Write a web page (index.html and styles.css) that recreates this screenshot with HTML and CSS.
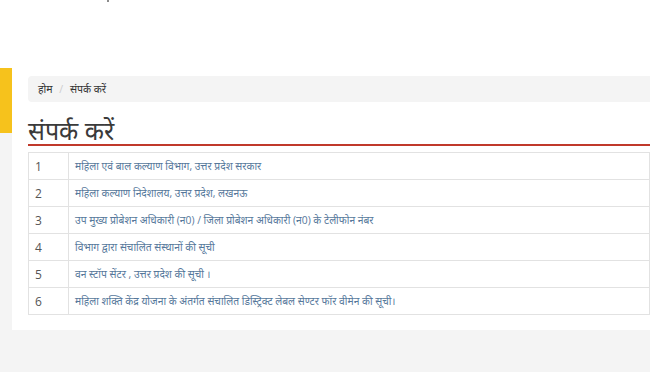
FILE: index.html
```html
<!DOCTYPE html>
<html lang="hi">
<head>
    <meta charset="UTF-8">
    <meta name="viewport" content="width=device-width, initial-scale=1.0">
    <title>संपर्क करें</title>
    <link rel="stylesheet" href="styles.css">
</head>
<body>
    <header class="top-header">
        <span class="header-dot"></span>
    </header>

    <div class="page">
        <aside class="side-strip">
            <div class="side-accent"></div>
        </aside>

        <main class="content-card">
            <div class="breadcrumb">
                <a href="#">होम</a>
                <span class="sep">/</span>
                <span class="current">संपर्क करें</span>
            </div>

            <h1 class="page-title">संपर्क करें</h1>

            <table class="contact-table">
                <tr>
                    <td class="num">1</td>
                    <td><a href="#">महिला एवं बाल कल्याण विभाग, उत्तर प्रदेश सरकार</a></td>
                </tr>
                <tr>
                    <td class="num">2</td>
                    <td><a href="#">महिला कल्याण निदेशालय, उत्तर प्रदेश, लखनऊ</a></td>
                </tr>
                <tr>
                    <td class="num">3</td>
                    <td><a href="#">उप मुख्य प्रोबेशन अधिकारी (न0) / जिला प्रोबेशन अधिकारी (न0) के टेलीफोन नंबर</a></td>
                </tr>
                <tr>
                    <td class="num">4</td>
                    <td><a href="#">विभाग द्वारा संचालित संस्थानों की सूची</a></td>
                </tr>
                <tr>
                    <td class="num">5</td>
                    <td><a href="#">वन स्टॉप सेंटर , उत्तर प्रदेश की सूची ।</a></td>
                </tr>
                <tr>
                    <td class="num">6</td>
                    <td><a href="#">महिला शक्ति केंद्र योजना के अंतर्गत संचालित डिस्ट्रिक्ट लेबल सेण्टर फॉर वीमेन की सूची।</a></td>
                </tr>
            </table>
        </main>
    </div>
</body>
</html>
```

FILE: styles.css
```css
body {
    margin: 0;
    background-color: #f4f4f4;
    color: #333;
    font-family: 'Open Sans', 'Noto Sans', sans-serif;
    font-size: 12px;
    overflow: hidden;
}

.top-header {
    height: 68px;
    background-color: #fff;
    position: relative;
}

.header-dot {
    position: absolute;
    left: 107px;
    top: 0;
    width: 2px;
    height: 2px;
    border-radius: 50%;
    background-color: #666;
}

.page {
    display: flex;
    align-items: flex-start;
}

.side-strip {
    width: 12px;
    flex-shrink: 0;
}

.side-accent {
    height: 65px;
    background-color: #f6c21c;
}

.content-card {
    flex: 1;
    background-color: #fff;
    padding: 8px 0 15px 16px;
    min-height: 262px;
    box-sizing: border-box;
}

.breadcrumb {
    height: 26px;
    line-height: 26px;
    background-color: #f4f4f4;
    border-radius: 4px 0 0 4px;
    padding: 0 10px;
    font-size: 10.5px;
}

.breadcrumb a {
    color: #333;
    text-decoration: none;
}

.breadcrumb .sep {
    color: #ccc;
    padding: 0 4px;
}

.page-title {
    margin: 14px 0 0;
    font-size: 25px;
    font-weight: normal;
    line-height: 28px;
    border-bottom: 2px solid #c0392b;
    color: #3a3a3a;
}

.contact-table {
    margin-top: 6px;
    width: 100%;
    border-collapse: collapse;
    border-top: 1px solid #d5e6ec;
}

.contact-table td {
    height: 26px;
    padding: 0 6px;
    border: 1px solid #e2e2e2;
    font-size: 10.3px;
    vertical-align: middle;
}

.contact-table td.num {
    width: 27px;
    color: #555;
    font-size: 12px;
}

.contact-table a {
    color: #56789b;
    text-decoration: none;
}
```
